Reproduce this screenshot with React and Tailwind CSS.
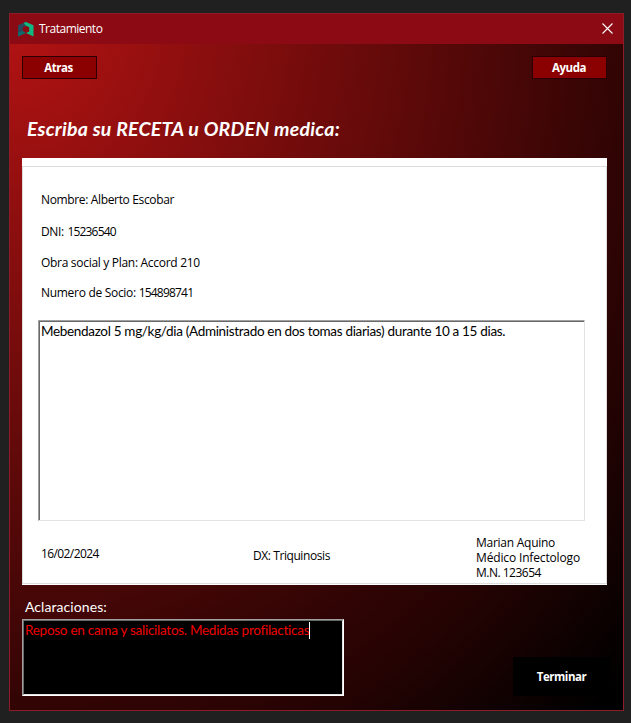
import React from 'react';

function Logo() {
  return (
    <svg className="block h-[15px] w-4" viewBox="0 0 16 15">
      <path d="M0 3.2 8 0l1.5 3L4.8 5.2v4.6L0 11z" fill="#274a5c" />
      <path d="M0 10.5 4.8 9 8 11 0 14.5z" fill="#0d6b6c" />
      <path d="M5.5 1 8 0l7.5 3.2v11.3L8 11l3.2-1.5V5.2L8 3.8z" fill="#10b981" />
    </svg>
  );
}

function Button({ className, children }) {
  return (
    <button className={`flex items-center justify-center whitespace-nowrap font-['Open_Sans',sans-serif] text-[11.5px] font-bold leading-4 tracking-[-0.45px] text-white ${className}`}>
      {children}
    </button>
  );
}

export default function App() {
  return (
    <div className="h-[723px] w-[631px] overflow-hidden bg-[#202020] pl-[9px] pt-[13px] font-['Open_Sans',sans-serif]">
      <div className="flex h-[698px] w-[615px] flex-col border border-[#8d1c27] bg-[radial-gradient(615px_698px_at_0_0,#b51313_0%,#310404_100%,#260303_111%,#000_138%)]">
        <header className="flex h-[30px] shrink-0 items-center bg-[#8b0a14] pl-2 pr-[10px]">
          <Logo />
          <span className="ml-[5px] text-[12px] leading-4 tracking-[-0.5px] text-white">Tratamiento</span>
          <svg className="mb-[2px] ml-auto h-[11px] w-[11px]" viewBox="0 0 11 11">
            <path d="M.5.5l10 10M10.5.5l-10 10" stroke="#fff" strokeWidth="1.1" />
          </svg>
        </header>

        <main className="flex flex-1 flex-col pl-3 pt-3">
          <div className="flex w-[585px] justify-between">
            <Button className="h-[23px] w-[75px] border border-[#2a0000] bg-[#8b0000] pr-[2px]">Atras</Button>
            <Button className="h-[23px] w-[75px] border border-[#2a0000] bg-[#8b0000] pr-px">Ayuda</Button>
          </div>

          <h1 className="ml-[5px] mt-[38px] h-6 whitespace-nowrap font-[Lato,sans-serif] text-[19.5px] font-bold italic leading-6 tracking-[0.25px] text-white">
            Escriba su RECETA u ORDEN medica:
          </h1>

          <section className="mt-[17px] h-[427px] w-[585px] shrink-0 bg-white pt-2">
            <div className="flex h-[418px] flex-col border border-[#dcdcdc] pl-[15px] text-[12px] leading-4 text-black">
              <div className="ml-[3px] mt-[25px] whitespace-nowrap">
                <p className="tracking-[-0.35px]">Nombre: Alberto Escobar</p>
                <p className="mt-4 tracking-[-0.4px]">DNI: <span className="ml-px tracking-[-0.8px]">15236540</span></p>
                <p className="mt-[15px] tracking-[-0.3px]">Obra social y Plan: Accord 210</p>
                <p className="mt-[14px] tracking-[-0.3px]">Numero de Socio: <span className="tracking-[-0.8px]">154898741</span></p>
              </div>
              <div className="mt-[19px] h-[201px] w-[547px] shrink-0 border border-b-[#e3e3e3] border-l-[#a0a0a0] border-r-[#e3e3e3] border-t-[#a0a0a0]">
                <div className="h-full border-l border-t border-[#696969] pl-px font-[Lato,sans-serif] text-[13.5px] leading-[18px] tracking-[-0.32px]">
                  <p className="whitespace-nowrap">Mebendazol 5 mg/kg/dia (Administrado en dos tomas diarias) durante 10 a 15 dias.</p>
                </div>
              </div>
              <footer className="ml-[3px] flex whitespace-nowrap">
                <p className="mt-[25px] w-[212px] tracking-[-0.6px]">16/02/2024</p>
                <p className="mt-[27px] w-[223px] tracking-[-0.42px]">DX: Triquinosis</p>
                <div className="mt-[14px] leading-[15px]">
                  <p className="tracking-[-0.26px]">Marian Aquino</p>
                  <p className="tracking-[-0.15px]">Médico Infectologo</p>
                  <p className="tracking-[-0.5px]">M.N. 123654</p>
                </div>
              </footer>
            </div>
          </section>

          <div className="flex w-[588px] justify-between">
            <div className="font-[Lato,sans-serif] text-[13.5px] leading-[18px]">
              <label className="ml-[3px] mt-[13px] block text-[14px] tracking-[0.07px] text-white">Aclaraciones:</label>
              <div className="mt-[3px] h-[77px] w-[322px] border border-b-white border-l-[#a0a0a0] border-r-white border-t-[#a0a0a0]">
                <div className="flex h-full border border-b-[#e3e3e3] border-l-[#696969] border-r-[#e3e3e3] border-t-[#696969] bg-black pl-px">
                  <span className="whitespace-nowrap tracking-[-0.27px] text-[#f00000]">Reposo en cama y salicilatos. Medidas profilacticas</span>
                  <span className="mt-px h-[17px] w-px bg-white" />
                </div>
              </div>
            </div>
            <Button className="mt-[72px] h-[39px] w-[97px] bg-black">Terminar</Button>
          </div>
        </main>
      </div>
    </div>
  );
}
